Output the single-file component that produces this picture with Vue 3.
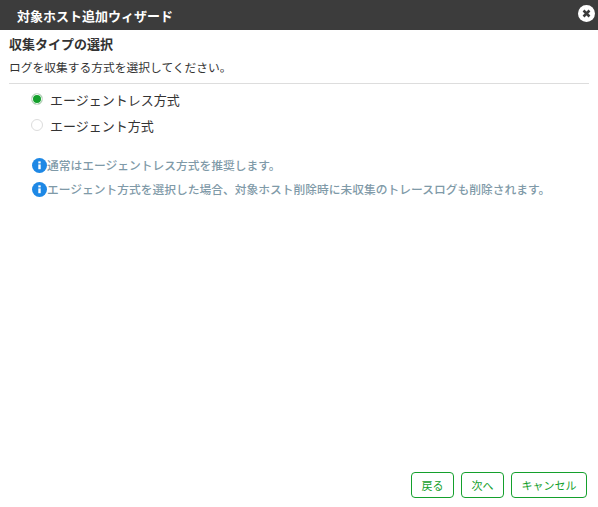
<template>
  <div class="dialog">
    <header class="title-bar">
      <span class="title">対象ホスト追加ウィザード</span>
      <button class="close" type="button" aria-label="閉じる">
        <svg width="17" height="17" viewBox="0 0 16 16">
          <circle cx="8" cy="8" r="8" fill="#fff" />
          <path d="M5.2 5.2l5.6 5.6M10.8 5.2l-5.6 5.6" stroke="#3c3c3c" stroke-width="2.4" fill="none" />
        </svg>
      </button>
    </header>

    <main class="content">
      <h2>収集タイプの選択</h2>
      <p class="lead">ログを収集する方式を選択してください。</p>

      <div class="options">
        <label v-for="opt in options" :key="opt.value" class="option">
          <span class="radio" :class="{ checked: selected === opt.value }" @click="selected = opt.value"></span>
          <span>{{ opt.label }}</span>
        </label>
      </div>

      <div class="notes">
        <p v-for="note in notes" :key="note" class="note">
          <svg width="15" height="15" viewBox="0 0 15 15">
            <circle cx="7.5" cy="7.5" r="7.5" fill="#1e88e5" />
            <rect x="6.3" y="6.4" width="2.4" height="4.8" fill="#fff" />
            <rect x="6.3" y="3.4" width="2.4" height="2" fill="#fff" />
          </svg>
          <span>{{ note }}</span>
        </p>
      </div>
    </main>

    <footer class="actions">
      <button type="button" class="btn back">戻る</button>
      <button type="button" class="btn next">次へ</button>
      <button type="button" class="btn cancel">キャンセル</button>
    </footer>
  </div>
</template>

<script setup>
import { ref } from 'vue'

const selected = ref('agentless')
const options = [
  { value: 'agentless', label: 'エージェントレス方式' },
  { value: 'agent', label: 'エージェント方式' }
]
const notes = [
  '通常はエージェントレス方式を推奨します。',
  'エージェント方式を選択した場合、対象ホスト削除時に未収集のトレースログも削除されます。'
]
</script>

<style>
html, body {
  margin: 0;
  background: #fff;
}
</style>

<style scoped>
.dialog {
  width: 598px;
  height: 507px;
  display: flex;
  flex-direction: column;
  background: #fff;
  color: #333;
  font-family: "Noto Sans CJK JP", "Noto Sans", sans-serif;
  overflow: hidden;
}
.title-bar {
  height: 30px;
  flex: none;
  display: flex;
  align-items: center;
  justify-content: space-between;
  padding: 0 3px 0 17px;
  background: #3c3c3c;
}
.title {
  color: #fff;
  font-size: 13px;
  font-weight: 700;
}
.close {
  display: flex;
  padding: 0;
  border: 0;
  background: none;
  margin-top: -4px;
}
.content {
  flex: 1;
  padding: 0 9px;
}
h2 {
  margin: 5px 0 0;
  font-size: 13px;
  line-height: 18px;
  font-weight: 700;
}
.lead {
  margin: 6px 0 0;
  padding-bottom: 8px;
  font-size: 11.76px;
  line-height: 16px;
  border-bottom: 1px solid #ddd;
}
.options {
  margin-top: 2px;
  padding-left: 22px;
}
.option {
  height: 26px;
  display: flex;
  align-items: center;
  gap: 7px;
  font-size: 13px;
}
.radio {
  width: 12px;
  height: 12px;
  box-sizing: border-box;
  border: 1px solid #dcdcdc;
  border-radius: 50%;
  background: #fff;
}
.radio.checked {
  background: #14a02c;
  box-shadow: inset 0 0 0 1px #fff;
}
.notes {
  margin-top: 18px;
  padding-left: 23px;
}
.note {
  margin: 0 0 8px;
  height: 16px;
  display: flex;
  align-items: center;
  font-size: 11.76px;
  font-weight: 500;
  color: #7f9aa8;
}
.note svg {
  flex: none;
  margin-top: 2px;
}
.actions {
  flex: none;
  display: flex;
  justify-content: flex-end;
  gap: 7px;
  padding: 0 11px 9px;
}
.btn {
  height: 26px;
  padding: 0;
  box-sizing: border-box;
  border: 1px solid #14a02c;
  border-radius: 4px;
  background: #fff;
  color: #14a02c;
  font-family: inherit;
  font-size: 11px;
  font-weight: 400;
}
.back, .next {
  width: 43px;
}
.cancel {
  width: 76px;
}
</style>
